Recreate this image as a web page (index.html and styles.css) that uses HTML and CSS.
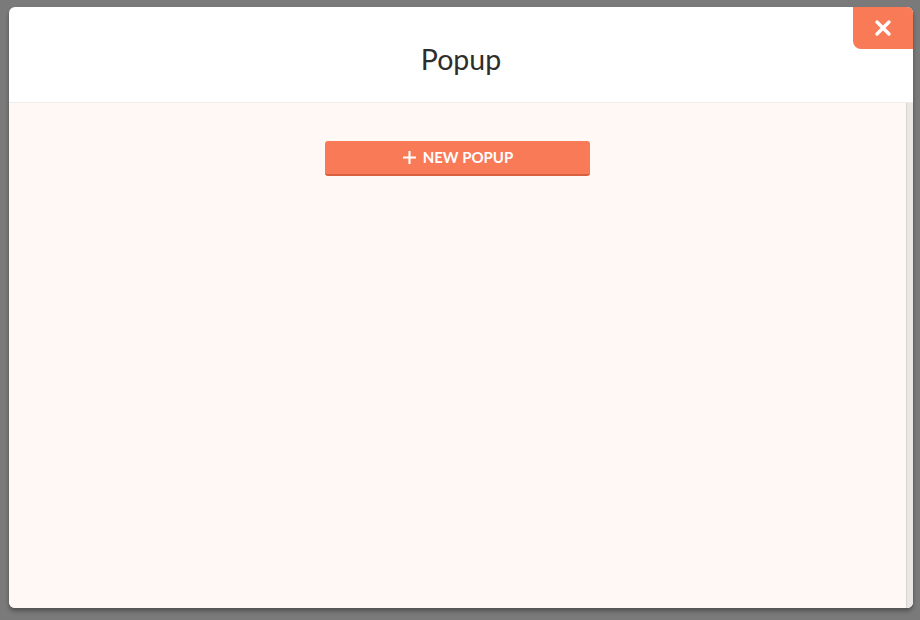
FILE: index.html
```html
<!DOCTYPE html>
<html lang="en">
<head>
    <meta charset="UTF-8">
    <meta name="viewport" content="width=device-width, initial-scale=1.0">
    <title>Popup</title>
    <link rel="stylesheet" href="styles.css">
</head>
<body>
    <div class="modal">
        <div class="modal-header">
            <h1>Popup</h1>
            <button class="close-btn" aria-label="Close">
                <svg width="18" height="18" viewBox="0 0 18 18">
                    <path d="M3 3 L15 15 M15 3 L3 15" stroke="#fff" stroke-width="3.4" stroke-linecap="round"/>
                </svg>
            </button>
        </div>
        <div class="modal-body">
            <div class="content">
                <button class="new-btn">
                    <svg width="14" height="14" viewBox="0 0 14 14">
                        <path d="M7 1 V13 M1 7 H13" stroke="#fff" stroke-width="2"/>
                    </svg>
                    NEW POPUP
                </button>
            </div>
            <div class="scrollbar"></div>
        </div>
    </div>
</body>
</html>
```

FILE: styles.css
```css
html, body {
    height: 100%;
}

body {
    margin: 0;
    padding: 7px 7px 12px 9px;
    box-sizing: border-box;
    background-color: #7a7a7a;
    font-family: Lato, "Open Sans", sans-serif;
}

.modal {
    width: 904px;
    height: 601px;
    display: flex;
    flex-direction: column;
    background: #fff;
    border-radius: 6px;
    overflow: hidden;
    box-shadow: 0 3px 4px rgba(0, 0, 0, 0.35);
}

.modal-header {
    position: relative;
    height: 96px;
    flex: none;
    display: flex;
    align-items: center;
    justify-content: center;
    border-bottom: 1px solid #f0ecea;
    box-sizing: border-box;
}

.modal-header h1 {
    margin: 8px 0 0 0;
    font-size: 28.5px;
    font-weight: 400;
    color: #2e2e2e;
}

.close-btn {
    position: absolute;
    top: 0;
    right: 0;
    width: 60px;
    height: 42px;
    border: none;
    padding: 0;
    background: #f87a57;
    border-bottom-left-radius: 8px;
    display: flex;
    align-items: center;
    justify-content: center;
    cursor: pointer;
}

.modal-body {
    flex: 1;
    display: flex;
    background: #fff8f5;
}

.content {
    flex: 1;
    display: flex;
    justify-content: center;
    align-items: flex-start;
    padding-top: 38px;
}

.new-btn {
    width: 265px;
    height: 35px;
    display: flex;
    align-items: center;
    justify-content: center;
    gap: 6px;
    padding: 0 0 1px 0;
    border: none;
    border-bottom: 2px solid #d9603f;
    border-radius: 3px;
    background: #f87a57;
    color: #fff;
    font-family: Lato, "Open Sans", sans-serif;
    font-weight: 700;
    font-size: 15px;
    cursor: pointer;
}

.new-btn svg {
    width: 15px;
    height: 15px;
}

.scrollbar {
    width: 7px;
    flex: none;
    background: #e9e6e4;
    border-left: 1px solid #d7d3d1;
    box-sizing: border-box;
}
```
